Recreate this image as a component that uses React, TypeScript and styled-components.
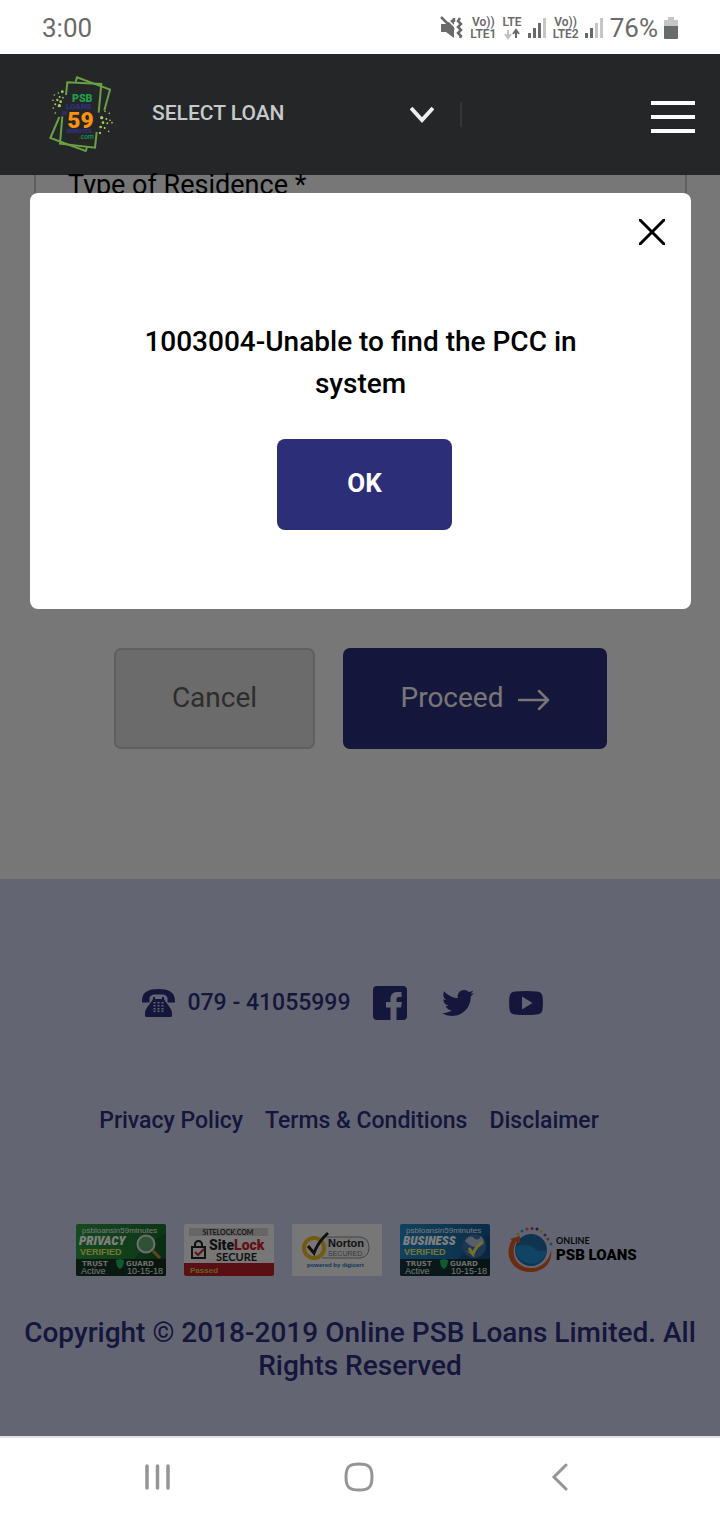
import React from "react";
import styled, { createGlobalStyle } from "styled-components";
import { FaTwitter } from "react-icons/fa";

const navy = "#2b2d77";

const GlobalStyle = createGlobalStyle`
  *, *::before, *::after { box-sizing: border-box; }
  body { margin: 0; font-family: Roboto, "Liberation Sans", sans-serif; background: #fff; }
  button, select { font-family: inherit; }
  svg { display: block; flex: none; }
`;

const Screen = styled.div`
  display: flex;
  flex-direction: column;
  min-height: 100vh;
`;

/* Phone status bar */
const StatusBar = styled.div`
  display: flex;
  align-items: center;
  justify-content: space-between;
  height: 54px;
  padding: 2px 42px 0;
  color: #6a6a6a;
  font-size: 26px;
`;

const StatusIcons = styled.div`
  display: flex;
  align-items: center;
  gap: 6px;
`;

const Carrier = styled.div`
  display: flex;
  flex-direction: column;
  align-items: center;
  font-size: 12px;
  line-height: 12px;
  font-weight: 600;
`;

/* Site header */
const Header = styled.header`
  display: flex;
  align-items: center;
  height: 121px;
  padding: 0 25px 0 49px;
  background: #252628;
`;

const LoanField = styled.label`
  display: flex;
  align-items: center;
  width: 310px;
  margin-left: 38px;
  padding-right: 26px;
  border-right: 2px solid #343537;
  height: 25px;
`;

const LoanSelect = styled.select`
  flex: 1;
  appearance: none;
  border: 0;
  padding: 0 0 4px;
  background: transparent;
  color: #c8c9ca;
  font-size: 21px;
  line-height: 24px;
  font-weight: 500;
`;

const MenuButton = styled.button`
  display: flex;
  flex-direction: column;
  gap: 10px;
  width: 44px;
  margin: 4px 0 0 auto;
  padding: 0;
  border: 0;
  background: transparent;
`;

const MenuBar = styled.span`
  height: 4px;
  background: #fff;
`;

/* Page under the dialog */
const Page = styled.div`
  position: relative;
  flex: 1;
  display: flex;
  flex-direction: column;
`;

const Main = styled.main`
  flex: 1;
  padding: 0 33px 130px 34px;
  background: #eee;
`;

const FormCard = styled.section`
  min-height: 400px;
  padding: 0 32px;
  border: 2px solid #bebebe;
  border-top: 0;
`;

const FieldTitle = styled.h2`
  margin: 0;
  font-size: 27px;
  line-height: 20px;
  font-weight: 400;
  color: #000;
`;

const Actions = styled.div`
  display: flex;
  justify-content: center;
  gap: 28px;
  margin-top: 73px;
`;

const ActionButton = styled.button<{ $primary?: boolean }>`
  display: flex;
  align-items: center;
  justify-content: center;
  gap: 14px;
  width: ${(p) => (p.$primary ? 264 : 201)}px;
  height: 101px;
  padding: 0 0 2px;
  border: 2px solid ${(p) => (p.$primary ? navy : "#bebebe")};
  border-radius: 7px;
  background: ${(p) => (p.$primary ? navy : "#d6d6d6")};
  color: ${(p) => (p.$primary ? "#eee" : "#5a5a5a")};
  font-size: 28px;
`;

const Footer = styled.footer`
  display: flex;
  flex-direction: column;
  align-items: center;
  padding: 107px 20px 54px;
  background: #c8cae6;
  color: ${navy};
  font-weight: 500;
`;

const ContactRow = styled.div`
  display: flex;
  align-items: center;
  height: 34px;
`;

const Phone = styled.a`
  display: flex;
  align-items: center;
  gap: 12px;
  margin-right: 22px;
  color: inherit;
  font-size: 23px;
  line-height: 30px;
  text-decoration: none;
`;

const Social = styled.a`
  margin-right: 35px;
  color: inherit;
`;

const Links = styled.nav`
  display: flex;
  margin-top: 88px;
`;

const FooterLink = styled.a`
  margin-right: 22px;
  color: inherit;
  font-size: 23px;
  line-height: 26px;
  text-decoration: none;
`;

const Badges = styled.div`
  display: flex;
  gap: 18px;
  margin-top: 90px;
  padding-right: 8px;
`;

const Copyright = styled.p`
  margin: 40px 0 0;
  font-size: 28px;
  line-height: 33px;
  text-align: center;
`;

/* Dialog */
const Backdrop = styled.div`
  position: absolute;
  inset: 0;
  padding: 18px 29px 0 30px;
  background: rgba(0, 0, 0, 0.5);
`;

const Dialog = styled.div`
  display: flex;
  flex-direction: column;
  align-items: center;
  padding: 26px 26px 79px;
  border-radius: 8px;
  background: #fff;
`;

const CloseButton = styled.button`
  align-self: flex-end;
  padding: 0;
  border: 0;
  background: transparent;
`;

const Message = styled.p`
  margin: 76px 60px 0;
  font-size: 28px;
  line-height: 42px;
  font-weight: 500;
  text-align: center;
  color: #000;
`;

const OkButton = styled.button`
  width: 175px;
  height: 91px;
  margin: 34px 0 0 8px;
  padding: 0 0 3px;
  border: 0;
  border-radius: 8px;
  background: #2c2f78;
  color: #fff;
  font-size: 26px;
  font-weight: 700;
`;

/* Phone navigation */
const SystemNav = styled.nav`
  display: grid;
  grid-template-columns: repeat(3, 1fr);
  height: 84px;
  padding: 0 60px 4px 57px;
  border-top: 2px solid #e1e1e1;
  background: #fff;
`;

const SystemButton = styled.button`
  display: flex;
  align-items: center;
  justify-content: center;
  border: 0;
  padding: 0;
  background: transparent;
`;

const MuteIcon = () => (
  <svg width="24" height="24" viewBox="0 0 24 24" fill="#6a6a6a">
    <path d="M1 8h5l8-6v20l-8-6H1z" />
    <path d="M3 -1l13 13" stroke="#fff" strokeWidth="1.500" />
    <path d="M1 1l13 13" stroke="#6a6a6a" strokeWidth="2.500" />
    <path d="M20 2l-2 3 3 3-3 3 3 3-3 3 3 3-1 2M14 2v4" fill="none" stroke="#6a6a6a" strokeWidth="2.500" />
  </svg>
);

const Signal = ({ level }: { level: number }) => (
  <svg width="19" height="22" viewBox="0 0 19 22">
    {[0, 1, 2, 3].map((i) => (
      <rect key={i} x={i * 5} y={[16, 11, 6, 1][i]} width="3" height={[5, 10, 15, 20][i]} fill={i < level ? "#6a6a6a" : "#c6c6c6"} />
    ))}
  </svg>
);

const Logo = () => (
  <svg width="65" height="78" viewBox="57 47 195 234" fontFamily="Roboto, sans-serif" fontWeight="900">
    <g fill="none" stroke="#6aa043" strokeWidth="6">
      <path d="M108 104l4-38 102 5-8 86M200 215l-5 47-105-12 7-82" />
      <path d="M137 64l4-13 99 37-17 62M88 170l-27 63 106 39 4-11" />
    </g>
    <g fill="#a5cf5b">
      <circle cx="97" cy="94" r="4" /><circle cx="85" cy="98" r="2.5" /><circle cx="73" cy="104" r="2.5" />
      <circle cx="89" cy="110" r="3" /><circle cx="69" cy="120" r="2.5" /><circle cx="82" cy="119" r="3.5" />
      <circle cx="92" cy="124" r="4" /><circle cx="76" cy="132" r="3" /><circle cx="88" cy="136" r="5" />
      <circle cx="70" cy="143" r="2.5" /><circle cx="76" cy="158" r="2.5" /><circle cx="99" cy="112" r="2.5" />
      <circle cx="225" cy="153" r="2.5" /><circle cx="238" cy="159" r="2.5" /><circle cx="215" cy="172" r="5" />
      <circle cx="229" cy="176" r="3" /><circle cx="240" cy="180" r="2.5" /><circle cx="219" cy="187" r="4" />
      <circle cx="232" cy="189" r="3" /><circle cx="246" cy="187" r="2.5" /><circle cx="212" cy="200" r="4" />
      <circle cx="224" cy="203" r="3" /><circle cx="236" cy="213" r="2.5" /><circle cx="210" cy="218" r="3.5" />
    </g>
    <text x="126" y="124" fontSize="32" fill="#1ca04b">PSB</text>
    <text x="107" y="147" fontSize="24" fill="#2f3182">LOANS</text>
    <text x="95" y="165" fontSize="16" fill="#2f3182">IN</text>
    <text x="112" y="202" fontSize="68" fill="#f8930f">59</text>
    <text x="111" y="219" fontSize="17" fill="#2f3182">MINUTES</text>
    <text x="147" y="236" fontSize="20" fontWeight="500" fill="#149a55">.com</text>
  </svg>
);

const PhoneIcon = () => (
  <svg width="33" height="28" viewBox="0 0 33 28" fill="currentColor">
    <path d="M0 12C0 3 6 0 16.500 0S33 3 33 12v1.500h-7.500V8.500C24 6 22 5.500 20 5.500H13C11 5.500 9 6 7.500 8.500v5H0z" />
    <path fillRule="evenodd" d="M11 8h2v2h7V8h2v2c1 3 8 9 8 14v2.500a1.500 1.500 0 0 1-1.500 1.500h-24A1.500 1.500 0 0 1 3 26.500V24c0-5 7-11 8-14z" />
    <g fill="#c8cae6">
      {[13, 16, 19, 21.5].map((y) => [11.5, 15.5, 19.5].map((x) => <rect key={`${x}-${y}`} x={x} y={y} width="2" height="1.500" />))}
    </g>
  </svg>
);

const FacebookIcon = () => (
  <svg width="34" height="34" viewBox="0 0 34 34" fill="currentColor">
    <path d="M4 0h26a4 4 0 0 1 4 4v26a4 4 0 0 1-4 4h-6.500V21.500h4.500l1-5.500h-5.500v-2.500c0-1.700.8-2.500 2.500-2.500h2.500V6h-4c-4.500 0-7 2.500-7 7v3H13v5.500h4.500V34H4a4 4 0 0 1-4-4V4a4 4 0 0 1 4-4z" />
  </svg>
);

const YoutubeIcon = () => (
  <svg width="34" height="34" viewBox="0 0 34 34" fill="currentColor">
    <path fillRule="evenodd" d="M6 5.500q11-1 22 0 5 .4 5.500 5 .8 6.500 0 13-.5 4.600-5.500 5-11 1-22 0-5-.4-5.500-5-.8-6.500 0-13 .5-4.600 5.500-5zM13 10.500v13L23.500 17z" />
  </svg>
);

type TrustProps = { title: string; from: string; to: string; children: React.ReactNode };

const TrustBadge = ({ title, from, to, children }: TrustProps) => (
  <svg width="90" height="52" viewBox="0 0 90 52" fontFamily="Liberation Sans, sans-serif" role="img" aria-label={`${title} verified`}>
    <defs>
      <linearGradient id={title} x1="0" y1="0" x2="1" y2="0">
        <stop offset="0" stopColor={from} />
        <stop offset="1" stopColor={to} />
      </linearGradient>
    </defs>
    <rect width="90" height="52" rx="2" fill={`url(#${title})`} />
    <path d="M50 52Q60 22 90 10V52z" fill="#000" opacity=".15" />
    <path d="M0 35h90v15a2 2 0 0 1-2 2H2a2 2 0 0 1-2-2z" fill="#12251f" opacity=".85" />
    <text x="6" y="9" fontSize="8" fill="#eee">psbloansin59minutes</text>
    <text x="3" y="21" fontSize="13" fontFamily="Roboto Condensed, Roboto, sans-serif" fontWeight="900" fontStyle="italic" fill="#fff">{title}</text>
    <text x="4" y="31" fontSize="9" fontWeight="700" fill="#e8ec6c">VERIFIED</text>
    <text x="6" y="42" fontSize="7" fontFamily="DejaVu Sans, sans-serif" fontWeight="700" fill="#ddd">TRUST</text>
    <text x="50" y="42" fontSize="7" fontFamily="DejaVu Sans, sans-serif" fontWeight="700" fill="#ddd">GUARD</text>
    <path d="M40 36l4-1 4 1q0 7-4 9-4-2-4-9z" fill="#23b45a" />
    <text x="5" y="50" fontSize="9" fill="#eee">Active</text>
    <text x="51" y="50" fontSize="9" fill="#eee">10-15-18</text>
    {children}
  </svg>
);

const SiteLockBadge = () => (
  <svg width="90" height="52" viewBox="0 0 90 52" fontFamily="Lato, sans-serif" role="img" aria-label="SiteLock secure">
    <rect width="90" height="52" rx="2" fill="#eee" />
    <rect x="5" y="4" width="79" height="8" fill="#ccc" />
    <text x="44" y="11" fontSize="7" fontWeight="700" textAnchor="middle" fill="#333">SITELOCK.COM</text>
    <path d="M8 23h13v11H8zM11 23v-2.500a3.500 3.500 0 0 1 7 0V23" fill="none" stroke="#222" strokeWidth="2" />
    <path d="M11 28l3 3 6-6" fill="none" stroke="#c8202c" strokeWidth="2" />
    <text x="25" y="26" fontSize="14" fontWeight="900" fontFamily="Roboto, sans-serif" fill="#222">Site<tspan fill="#c8202c">Lock</tspan></text>
    <text x="32" y="37" fontSize="11" fontWeight="700" fill="#222">SECURE</text>
    <path d="M0 39h90v11a2 2 0 0 1-2 2H2a2 2 0 0 1-2-2z" fill="#b51f2b" />
    <text x="6" y="49" fontSize="8" fontWeight="700" fontFamily="Liberation Sans, sans-serif" fill="#c9c23c">Passed</text>
  </svg>
);

const NortonBadge = () => (
  <svg width="90" height="52" viewBox="0 0 90 52" fontFamily="Liberation Sans, sans-serif" role="img" aria-label="Norton secured">
    <rect width="90" height="52" fill="#eee" />
    <path d="M30 13h38q9 1 9 10.500T68 34H30" fill="#e6e6e6" stroke="#888" />
    <circle cx="22" cy="24" r="10" fill="#eee" stroke="#e4b41c" strokeWidth="4" />
    <path d="M16 22l6 7Q26 18 36 9" fill="none" stroke="#222" strokeWidth="3" />
    <text x="36" y="23" fontSize="11" fontWeight="700" fill="#222">Norton</text>
    <text x="36" y="32" fontSize="7" fill="#777">SECURED</text>
    <text x="15" y="43" fontSize="6" fontWeight="700" fill="#226fae">powered by digicert</text>
  </svg>
);

const OnlineLogo = () => (
  <svg width="129" height="52" viewBox="0 0 129 52" fontFamily="Roboto, sans-serif" role="img" aria-label="Online PSB Loans">
    <circle cx="23" cy="26" r="16" fill="#20679f" />
    <path d="M7.500 22Q22 19 26 24T39 26a16 16 0 0 1-31.500 1z" fill="#2386c8" />
    <path d="M4 16C-4 29 2 46 20 48c16 1 25-10 23-22-1 9-9 19-21 18C8 43 2 30 8 18l4 1V12l-10 3z" fill="#d3581e" />
    {[[10, 10], [14, 7], [19, 5], [24, 4.5], [29, 5], [33, 7.5], [37, 11], [40, 15], [43, 20]].map(([x, y], i) => (
      <circle key={x} cx={x} cy={y} r="1.500" fill={["#c8b832", "#2a9ad0", "#e0602c", "#c33a50", "#2e3a9a", "#d8b52a", "#6546a0", "#d8602c", "#2aa5d0"][i]} />
    ))}
    <text x="48" y="20" fontSize="9" fontFamily="Lato, sans-serif" fontWeight="700" fill="#111">ONLINE</text>
    <text x="48" y="36" fontSize="15" fontWeight="900" fill="#000">PSB LOANS</text>
  </svg>
);

export default function App() {
  return (
    <Screen>
      <GlobalStyle />
      <StatusBar>
        <span>3:00</span>
        <StatusIcons>
          <MuteIcon />
          <Carrier><span>Vo))</span><span>LTE1</span></Carrier>
          <Carrier>
            <span>LTE</span>
            <svg width="16" height="12" viewBox="0 0 16 12" fill="none" strokeWidth="2">
              <path d="M4 2v8M1 6l3 4 3-4" stroke="#c0c0c0" />
              <path d="M12 10V2M9 6l3-4 3 4" stroke="#6a6a6a" />
            </svg>
          </Carrier>
          <Signal level={3} />
          <Carrier><span>Vo))</span><span>LTE2</span></Carrier>
          <Signal level={2} />
          <span>76%</span>
          <svg width="14" height="23" viewBox="0 0 14 23">
            <path d="M4 0h6v3h4v6H0V3h4z" fill="#c6c6c6" />
            <path d="M0 9h14v12a1 1 0 0 1-1 1H1a1 1 0 0 1-1-1z" fill="#6a6a6a" />
          </svg>
        </StatusIcons>
      </StatusBar>

      <Header>
        <Logo />
        <LoanField>
          <LoanSelect aria-label="Select loan" defaultValue="none">
            <option value="none">SELECT LOAN</option>
          </LoanSelect>
          <svg width="24" height="17" viewBox="0 0 24 17">
            <path d="M1 2l11 12L23 2" fill="none" stroke="#eee" strokeWidth="4" />
          </svg>
        </LoanField>
        <MenuButton aria-label="Menu"><MenuBar /><MenuBar /><MenuBar /></MenuButton>
      </Header>

      <Page>
        <Main>
          <FormCard><FieldTitle>Type of Residence *</FieldTitle></FormCard>
          <Actions>
            <ActionButton>Cancel</ActionButton>
            <ActionButton $primary>
              Proceed
              <svg width="32" height="26" viewBox="0 0 32 26" fill="none" stroke="currentColor" strokeWidth="2.500" strokeLinecap="round" strokeLinejoin="round">
                <path d="M1 15h29M21 6l9 9-9 9" />
              </svg>
            </ActionButton>
          </Actions>
        </Main>
        <Footer>
          <ContactRow>
            <Phone href="tel:07941055999"><PhoneIcon />079 - 41055999</Phone>
            <Social href="#facebook" aria-label="Facebook"><FacebookIcon /></Social>
            <Social href="#twitter" aria-label="Twitter"><FaTwitter size={32} /></Social>
            <Social href="#youtube" aria-label="YouTube"><YoutubeIcon /></Social>
          </ContactRow>
          <Links>
            <FooterLink href="#privacy">Privacy Policy</FooterLink>
            <FooterLink href="#terms">Terms &amp; Conditions</FooterLink>
            <FooterLink href="#disclaimer">Disclaimer</FooterLink>
          </Links>
          <Badges>
            <TrustBadge title="PRIVACY" from="#2c9440" to="#1a6a2c">
              <path d="M77 27l7 7" stroke="#c98a3c" strokeWidth="3" />
              <circle cx="70" cy="20" r="8.500" fill="#5fa56d" stroke="#ddd" strokeWidth="2" />
            </TrustBadge>
            <SiteLockBadge />
            <NortonBadge />
            <TrustBadge title="BUSINESS" from="#2184c0" to="#135a90">
              <circle cx="74" cy="22" r="12" fill="#3d6ba8" />
              <path d="M65 17q5-7 9-3t7-2q5 6 1 9t-8 2-9-6zM66 27l6 1 3 5" fill="#aebfd6" />
              <path d="M69 24l4 6q3-8 10-12" fill="none" stroke="#e8e04a" strokeWidth="3" />
            </TrustBadge>
            <OnlineLogo />
          </Badges>
          <Copyright>Copyright © 2018-2019 Online PSB Loans Limited. All Rights Reserved</Copyright>
        </Footer>
        <Backdrop>
          <Dialog role="dialog" aria-modal="true" aria-labelledby="dialog-message">
            <CloseButton aria-label="Close">
              <svg width="26" height="26" viewBox="0 0 26 26">
                <path d="M1 1l24 24M25 1L1 25" stroke="#000" strokeWidth="3" strokeLinecap="round" />
              </svg>
            </CloseButton>
            <Message id="dialog-message">1003004-Unable to find the PCC in system</Message>
            <OkButton>OK</OkButton>
          </Dialog>
        </Backdrop>
      </Page>

      <SystemNav aria-label="System navigation">
        <SystemButton aria-label="Recent apps">
          <svg width="27" height="28" viewBox="0 0 27 28" stroke="#959595" strokeWidth="3.500" strokeLinecap="round">
            <path d="M3 3v22M13.500 3v22M24 3v22" />
          </svg>
        </SystemButton>
        <SystemButton aria-label="Home">
          <svg width="30" height="30" viewBox="0 0 30 30" fill="none" stroke="#959595" strokeWidth="3">
            <path d="M15 2C25 2 28 5 28 15S25 28 15 28 2 25 2 15 5 2 15 2z" />
          </svg>
        </SystemButton>
        <SystemButton aria-label="Back">
          <svg width="18" height="28" viewBox="0 0 18 28" fill="none" stroke="#959595" strokeWidth="3" strokeLinecap="round">
            <path d="M15 2L3 14l12 12" />
          </svg>
        </SystemButton>
      </SystemNav>
    </Screen>
  );
}
